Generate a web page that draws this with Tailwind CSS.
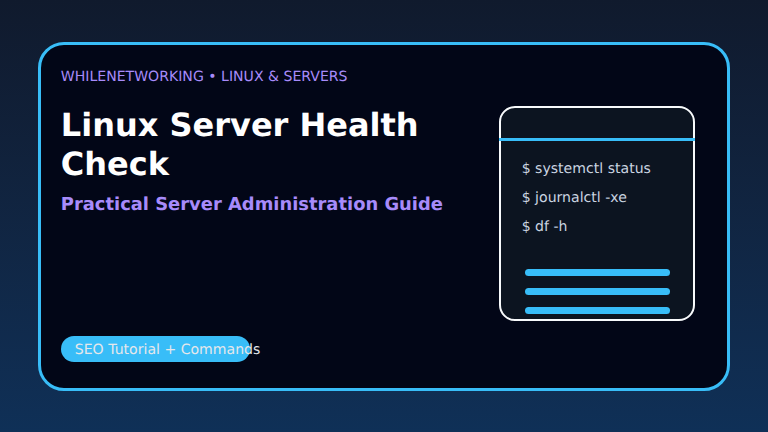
<!DOCTYPE html>
<html lang="en">

<head>
    <meta charset="utf-8" />
    <meta content="width=device-width, initial-scale=1.0" name="viewport" />
    <title>Linux Server Health Check</title>
    <script src="https://cdn.jsdelivr.net/npm/@tailwindcss/browser@4"></script>
</head>

<body class="w-[768px] h-[432px] overflow-hidden font-['DejaVu_Sans',sans-serif] [text-rendering:geometricPrecision]">
    <div class="w-full h-full pt-[41.6px] pl-[38.4px] bg-linear-to-b from-[#101a2d] to-[#0f3057]">
        <!-- card -->
        <div
            class="w-[691.2px] h-[349px] rounded-[26px] border-[3px] border-[#38bdf8] bg-[#020617] flex justify-between pl-[19.4px] pr-[32px] pt-[24.5px]">
            <div class="w-[400px] flex flex-col">
                <div class="text-[14.08px] leading-[17px] text-[#a78bfa] whitespace-nowrap">WHILENETWORKING • LINUX &amp; SERVERS</div>
                <h1 class="mt-[20px] text-[32px] leading-[39px] font-bold text-white">Linux Server Health Check</h1>
                <div class="mt-[10px] text-[17.92px] leading-[21px] font-bold text-[#a78bfa] whitespace-nowrap">Practical Server Administration Guide</div>
                <div
                    class="mt-[121px] w-[189px] h-[26px] pl-[14px] rounded-[13px] bg-[#38bdf8] text-[14.08px] leading-[28px] text-[#e5e7eb] whitespace-nowrap">
                    SEO Tutorial + Commands</div>
            </div>
            <!-- terminal -->
            <div class="mt-[37px] w-[195.5px] h-[215px] rounded-[16px] border-2 border-[#f8fafc] bg-[#0c1420] flex flex-col">
                <div class="h-[32.5px] border-b-[3px] border-[#38bdf8] -mx-[2px] shrink-0"></div>
                <div class="pl-[20.6px] pt-[20.5px] flex flex-col gap-[12px] text-[14.08px] leading-[17px] text-[#cbd5e1] whitespace-nowrap">
                    <div>$ systemctl status</div>
                    <div>$ journalctl -xe</div>
                    <div>$ df -h</div>
                </div>
                <div class="mt-[32.5px] ml-[24px] w-[145px] flex flex-col gap-[12px]">
                    <div class="h-[7px] rounded-full bg-[#38bdf8]"></div>
                    <div class="h-[7px] rounded-full bg-[#38bdf8]"></div>
                    <div class="h-[7px] rounded-full bg-[#38bdf8]"></div>
                </div>
            </div>
        </div>
    </div>
</body>

</html>
